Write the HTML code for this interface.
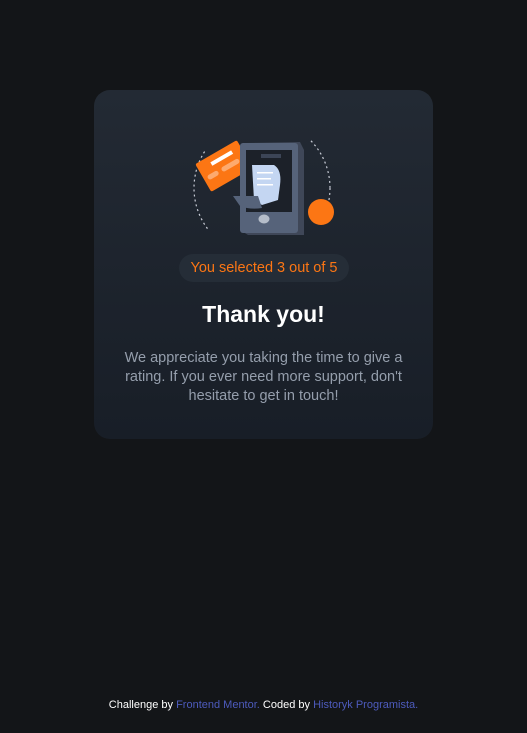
<!DOCTYPE html>
<html><head><meta charset="utf-8"><style>
*{margin:0;padding:0;box-sizing:border-box}
html,body{width:527px;height:733px;background:#131518;font-family:"Liberation Sans",sans-serif;overflow:hidden;position:relative}
.card{position:absolute;left:94px;top:90px;width:339px;height:349px;border-radius:16px;background:linear-gradient(180deg,#232a34 0%,#181e27 100%);}
svg{position:absolute;left:0;top:0}
.pill{position:absolute;left:85px;top:164px;width:170px;height:28px;border-radius:14px;background:#252d37;color:#fc7614;font-size:14.5px;line-height:28px;text-align:center}
h1{position:absolute;left:0;width:339px;top:211px;text-align:center;color:#fff;font-size:23px;font-weight:bold}
p{position:absolute;left:20px;width:299px;top:259px;text-align:center;color:#959eac;font-size:14.5px;line-height:19px}
.foot{position:absolute;left:0;width:527px;top:699px;text-align:center;color:#fff;font-size:11px}
.foot span{color:#4d5bbd}
</style></head><body>
<div class="card">
<svg width="339" height="160" viewBox="94 90 339 160">
 <circle cx="262" cy="188" r="68" fill="none" stroke="#c8ccd6" stroke-width="1.2" stroke-dasharray="2 3" transform="" clip-path="url(#c)"/>
 <defs><clipPath id="c"><rect x="185" y="150" width="60" height="80"/><rect x="300" y="140" width="40" height="60"/></clipPath></defs>
 <g transform="rotate(-30 224 166)"><rect x="200" y="150" width="48" height="32" rx="2" fill="#fc7614"/><rect x="214" y="156" width="24" height="4" fill="#fff"/><rect x="220" y="166" width="20" height="5" rx="2.5" fill="#fdaa6e"/><rect x="204" y="166" width="12" height="5" rx="2.5" fill="#fdaa6e"/></g>
 <polygon points="245,143 300,142 304,150 304,235 248,235 240,230" fill="#3f4758"/>
 <rect x="240" y="143" width="58" height="90" rx="3" fill="#56637a"/>
 <rect x="246" y="150" width="46" height="62" fill="#1c2129"/>
 <rect x="261" y="154" width="20" height="4" fill="#3c4556"/>
 <path d="M252 165 L274 165 Q282 170 280 185 L278 200 L262 205 L254 200 Z" fill="#c4d6f2"/>
 <path d="M233 196 L258 196 L262 208 Q250 210 240 206 Z" fill="#56637a"/>
 <rect x="257" y="172" width="16" height="1.5" fill="#fff"/><rect x="257" y="178" width="14" height="1.5" fill="#fff"/><rect x="257" y="184" width="16" height="1.5" fill="#fff"/>
 <ellipse cx="264" cy="219" rx="5.5" ry="4.5" fill="#b5bdc9"/>
 <circle cx="321" cy="212" r="13" fill="#fc7614"/>
</svg>
<div class="pill">You selected 3 out of 5</div>
<h1>Thank you!</h1>
<p>We appreciate you taking the time to give a rating. If you ever need more support, don't hesitate to get in touch!</p>
</div>
<div class="foot">Challenge by <span>Frontend Mentor.</span> Coded by <span>Historyk Programista.</span></div>
</body></html>
